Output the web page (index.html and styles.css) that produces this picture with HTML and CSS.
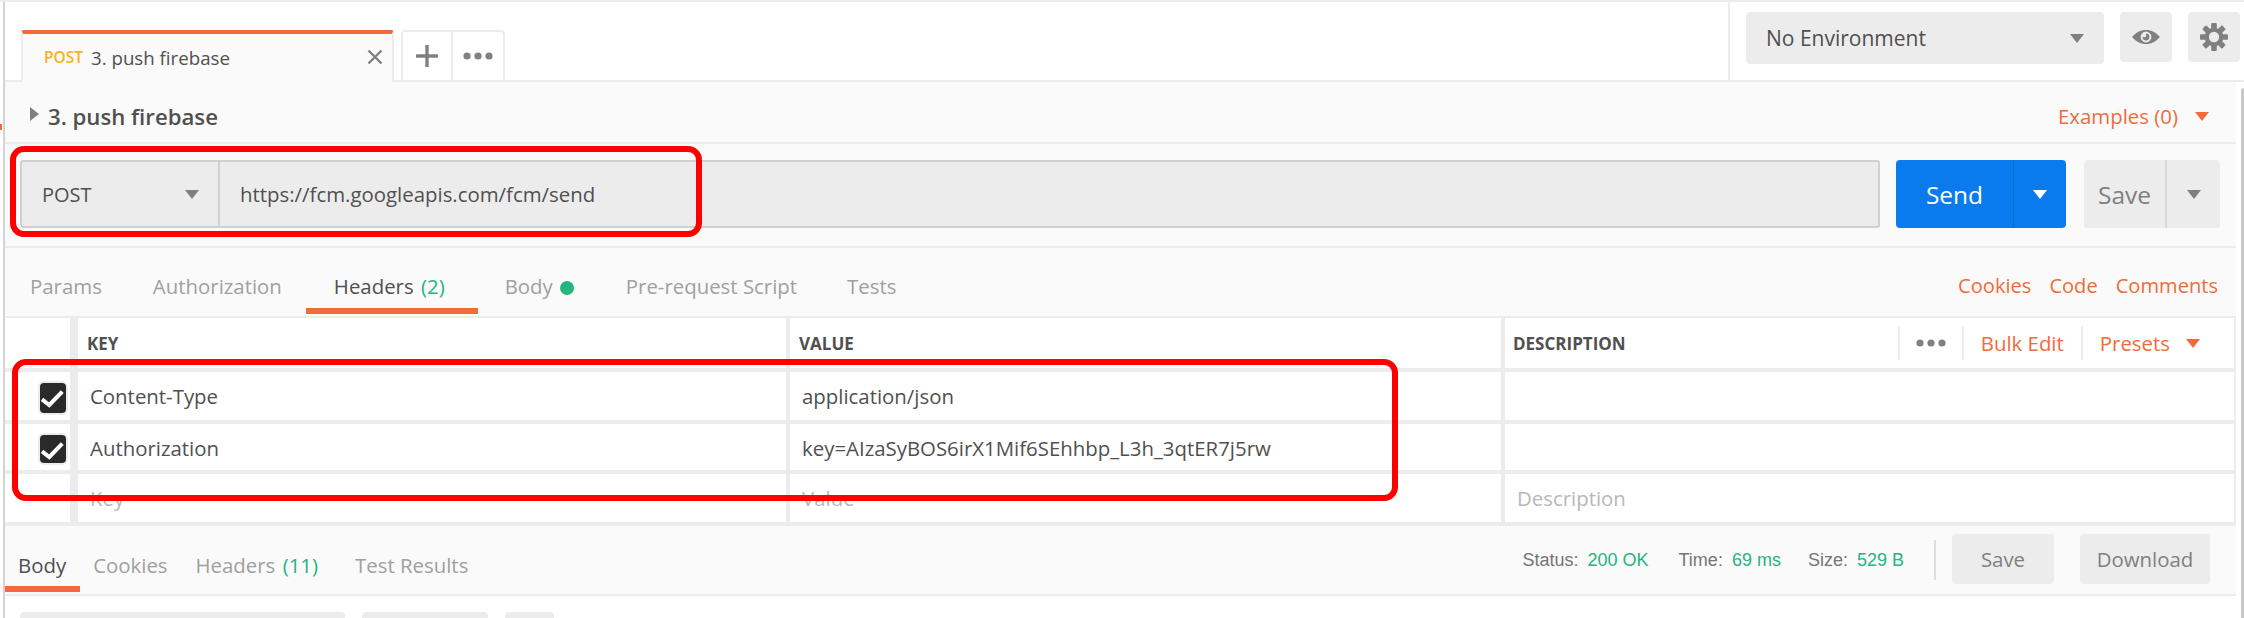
FILE: index.html
```html
<!DOCTYPE html>
<html lang="en">
<head>
<meta charset="utf-8">
<title>3. push firebase</title>
<link rel="stylesheet" href="styles.css">
</head>
<body>
<div class="app">
  <div class="edge-mark"></div>
  <header class="tabbar">
    <div class="tab">
      <span class="tab-method">POST</span>
      <span class="tab-name">3. push firebase</span>
      <svg class="tab-close" width="16" height="16" viewBox="0 0 16 16"><path d="M1.5 1.5l13 13M14.5 1.5l-13 13" stroke="#808080" stroke-width="2.4" fill="none"/></svg>
    </div>
    <div class="tab-actions">
      <div class="tab-action tab-action-plus">
        <svg width="22" height="22" viewBox="0 0 22 22"><path d="M11 1v20M1 11h20" stroke="#808080" stroke-width="3.4" stroke-linecap="round" fill="none"/></svg>
      </div>
      <div class="tab-action">
        <svg width="30" height="8" viewBox="0 0 30 8"><circle cx="4" cy="4" r="3.6" fill="#808080"/><circle cx="15" cy="4" r="3.6" fill="#808080"/><circle cx="26" cy="4" r="3.6" fill="#808080"/></svg>
      </div>
    </div>
    <div class="env">
      <div class="env-select">
        <span>No Environment</span>
        <i class="tri tri-grey"></i>
      </div>
      <div class="icon-btn">
        <svg width="28" height="14" viewBox="0 0 28 14"><path fill-rule="evenodd" fill="#808080" d="M0 7C4 2.500 8.500 0 14 0S24 2.500 28 7C24 11.500 19.500 14 14 14S4 11.500 0 7ZM14 1.600A5.400 5.400 0 1 0 14 12.400A5.400 5.400 0 1 0 14 1.600Z"/><path fill="#808080" d="M14 3.600A3.400 3.400 0 1 1 10.600 7L14 7Z"/></svg>
      </div>
      <div class="icon-btn">
        <svg width="28" height="28" viewBox="-15 -15 30 30"><g fill="#808080"><rect x="-3" y="-15" width="6" height="30" rx="1"/><rect x="-3" y="-15" width="6" height="30" rx="1" transform="rotate(45)"/><rect x="-3" y="-15" width="6" height="30" rx="1" transform="rotate(90)"/><rect x="-3" y="-15" width="6" height="30" rx="1" transform="rotate(135)"/></g><circle r="10" fill="#808080"/><circle r="5.500" fill="#ececec"/></svg>
      </div>
    </div>
  </header>

  <main class="builder">
    <div class="title-row">
      <i class="tri-right"></i>
      <h1 class="title">3. push firebase</h1>
      <div class="examples"><span>Examples (0)</span><i class="tri tri-orange"></i></div>
    </div>

    <div class="url-row">
      <div class="url-box">
        <div class="method"><span>POST</span><i class="tri tri-grey"></i></div>
        <div class="url">https://fcm.googleapis.com/fcm/send</div>
      </div>
      <div class="send-btn">
        <span class="send-label">Send</span>
        <span class="send-drop"><i class="tri tri-white"></i></span>
      </div>
      <div class="save-btn">
        <span class="save-label">Save</span>
        <span class="save-drop"><i class="tri tri-grey"></i></span>
      </div>
    </div>

    <nav class="req-tabs">
      <a class="req-tab req-params">Params</a>
      <a class="req-tab req-auth">Authorization</a>
      <a class="req-tab req-headers active">Headers <em class="count">(2)</em></a>
      <a class="req-tab req-body">Body<i class="dot"></i></a>
      <a class="req-tab req-pre">Pre-request Script</a>
      <a class="req-tab">Tests</a>
      <div class="req-links"><a>Cookies</a><a>Code</a><a>Comments</a></div>
    </nav>

    <div class="table">
      <div class="row row-head">
        <div class="cell cell-check"></div>
        <div class="cell cell-key">KEY</div>
        <div class="cell cell-value">VALUE</div>
        <div class="cell cell-desc">
          <span>DESCRIPTION</span>
          <div class="head-actions">
            <div class="head-more"><svg width="30" height="8" viewBox="0 0 30 8"><circle cx="4" cy="4" r="3.6" fill="#808080"/><circle cx="15" cy="4" r="3.6" fill="#808080"/><circle cx="26" cy="4" r="3.6" fill="#808080"/></svg></div>
            <a class="head-bulk">Bulk Edit</a>
            <a class="head-presets">Presets<i class="tri tri-orange"></i></a>
          </div>
        </div>
      </div>
      <div class="row row-one">
        <div class="cell cell-check"><span class="check"><svg width="26" height="30" viewBox="0 0 26 30"><path d="M2 16.300l7.300 5.700 13-13.300" stroke="#fff" stroke-width="4" fill="none"/></svg></span></div>
        <div class="cell cell-key">Content-Type</div>
        <div class="cell cell-value">application/json</div>
        <div class="cell cell-desc"></div>
      </div>
      <div class="row row-two">
        <div class="cell cell-check"><span class="check"><svg width="26" height="30" viewBox="0 0 26 30"><path d="M2 16.300l7.300 5.700 13-13.300" stroke="#fff" stroke-width="4" fill="none"/></svg></span></div>
        <div class="cell cell-key">Authorization</div>
        <div class="cell cell-value">key=AIzaSyBOS6irX1Mif6SEhhbp_L3h_3qtER7j5rw</div>
        <div class="cell cell-desc"></div>
      </div>
      <div class="row row-empty">
        <div class="cell cell-check"></div>
        <div class="cell cell-key">Key</div>
        <div class="cell cell-value">Value</div>
        <div class="cell cell-desc">Description</div>
      </div>
    </div>

    <div class="res-bar">
      <a class="res-tab active">Body</a>
      <a class="res-tab res-cookies">Cookies</a>
      <a class="res-tab res-headers">Headers <em class="count">(11)</em></a>
      <a class="res-tab">Test Results</a>
      <div class="res-meta">
        <span class="meta meta-status">Status: <b>200 OK</b></span>
        <span class="meta">Time: <b>69 ms</b></span>
        <span class="meta">Size: <b>529 B</b></span>
        <span class="meta-sep"></span>
        <span class="res-btn res-save">Save</span>
        <span class="res-btn res-download">Download</span>
      </div>
    </div>
  </main>

  <div class="res-tools">
    <span class="tool tool-a"></span>
    <span class="tool tool-b"></span>
    <span class="tool tool-c"></span>
  </div>

  <div class="scrollbar"></div>
  <div class="callout callout-url"></div>
  <div class="callout callout-rows"></div>
</div>
</body>
</html>
```

FILE: styles.css
```css
* { box-sizing: border-box; }
html, body { margin: 0; padding: 0; }
body { background: #fff; font-family: "Open Sans", "Liberation Sans", sans-serif; color: #505050; }
h1, a, em, b, i { font: inherit; font-style: normal; }

.app {
  position: relative;
  width: 2244px;
  height: 618px;
  overflow: hidden;
  padding: 0 0 0 4px;
  background: #fff;
  border-top: 2px solid #ececec;
}
.app::before {
  content: "";
  position: absolute;
  left: 3px; top: 0; bottom: 0;
  width: 2px;
  background: #d4d4d4;
}
.edge-mark {
  position: absolute;
  left: 0; top: 122px;
  width: 2px; height: 6px;
  background: #f26b3a;
}

/* top bar */
.tabbar {
  display: flex;
  align-items: flex-start;
  height: 80px;
  border-bottom: 2px solid #ececec;
  padding-left: 17px;
}
.tab {
  display: flex;
  align-items: center;
  width: 373px;
  height: 52px;
  margin-top: 28px;
  padding: 0 9px 2px 21px;
  background: #fafafa;
  border-top: 4px solid #f26b3a;
  border-left: 2px solid #ececec;
  border-right: 2px solid #ececec;
  border-radius: 3px 3px 0 0;
}
.tab-method { font-size: 15.5px; font-weight: 600; color: #fbb01e; margin-right: 8px; }
.tab-name { font-size: 18.7px; color: #505050; flex: 1; }
.tab-close { display: block; }
.tab-actions {
  display: flex;
  margin: 28px 0 0 7px;
  height: 50px;
  border: 2px solid #ececec;
  border-bottom: 0;
  border-radius: 4px 4px 0 0;
}
.tab-action { width: 50px; display: flex; align-items: center; justify-content: center; }
.tab-action-plus { border-right: 2px solid #ececec; }

.env {
  display: flex;
  align-items: flex-start;
  height: 78px;
  margin-left: auto;
  padding: 10px 4px 0 16px;
  border-left: 2px solid #ececec;
}
.env-select {
  display: flex;
  align-items: center;
  justify-content: space-between;
  width: 358px;
  height: 52px;
  padding: 0 20px;
  background: #ececec;
  border-radius: 4px;
  font-size: 21px;
  color: #505050;
}
.icon-btn {
  width: 52px; height: 50px;
  margin-left: 16px;
  background: #ececec;
  border-radius: 4px;
  display: flex; align-items: center; justify-content: center;
}

/* triangles */
.tri { display: block; width: 0; height: 0; border-left: 7px solid transparent; border-right: 7px solid transparent; border-top: 9px solid #808080; }
.tri-orange { border-top-color: #f26b3a; }
.tri-white { border-top-color: #fff; }
.tri-right { display: block; width: 0; height: 0; border-top: 7px solid transparent; border-bottom: 7px solid transparent; border-left: 9px solid #808080; margin: -4px 9px 0 0; }

/* builder */
.builder { width: 2232px; height: 514px; background: #fafafa; }
.title-row {
  display: flex;
  align-items: center;
  height: 62px;
  padding: 8px 27px 0 26px;
  border-bottom: 2px solid #ececec;
}
.title { font-size: 22.2px; font-weight: 600; margin: 0; color: #505050; }
.examples { display: flex; align-items: center; margin-left: auto; font-size: 20.4px; color: #f26b3a; }
.examples .tri { margin-left: 17px; }

.url-row {
  display: flex;
  height: 104px;
  padding: 16px 0 0 16px;
  border-bottom: 2px solid #ececec;
}
.url-box {
  display: flex;
  width: 1860px;
  height: 68px;
  background: #ececec;
  border: 2px solid #d0d0d0;
  border-radius: 3px;
}
.method {
  display: flex;
  align-items: center;
  justify-content: space-between;
  width: 198px;
  padding: 0 19px 0 20px;
  border-right: 2px solid #d0d0d0;
  font-size: 20px;
}
.url { display: flex; align-items: center; padding-left: 20px; font-size: 20.4px; }
.send-btn {
  display: flex;
  width: 170px;
  height: 68px;
  margin-left: 16px;
  color: #fff;
  background: #097bed;
  border-radius: 4px;
  font-size: 24.5px;
  font-weight: 500;
}
.send-label { width: 118px; display: flex; align-items: center; justify-content: center; border-right: 1px solid #0a6fd4; }
.send-drop { flex: 1; display: flex; align-items: center; justify-content: center; }
.save-btn {
  display: flex;
  width: 136px;
  height: 68px;
  margin-left: 18px;
  color: #808080;
  background: #ececec;
  border-radius: 4px;
  font-size: 24.5px;
  font-weight: 500;
}
.save-label { width: 83px; display: flex; align-items: center; justify-content: center; border-right: 2px solid #d8d8d8; }
.save-drop { flex: 1; display: flex; align-items: center; justify-content: center; }

.req-tabs {
  display: flex;
  align-items: flex-start;
  height: 68px;
  padding-left: 26px;
  font-size: 20.4px;
  color: #a0a0a0;
}
.req-tab { display: block; height: 66px; padding-top: 25px; line-height: 26px; }
.req-params { margin-right: 51px; }
.req-auth { margin-right: 24px; }
.req-headers { padding: 25px 33px 0 28px; margin-right: 27px; color: #505050; border-bottom: 6px solid #f26b3a; }
.count { color: #26b47f; margin-left: 2px; }
.req-body { display: flex; margin-right: 52px; }
.dot { display: block; width: 14px; height: 14px; margin: 8px 0 0 7px; border-radius: 50%; background: #26b47f; }
.req-pre { margin-right: 50px; }
.req-links { display: flex; gap: 18px; margin-left: auto; padding: 25px 18px 0 0; line-height: 26px; color: #f26b3a; font-size: 20.1px; }

/* table */
.table { background: #fff; border-top: 2px solid #ececec; border-right: 2px solid #ececec; }
.row {
  display: grid;
  grid-template-columns: 74px 712px 715px 1fr;
  border-bottom: 4px solid #ececec;
}
.row-head { height: 54px; }
.row-one { height: 52px; }
.row-two { height: 50px; }
.row-empty { height: 52px; }
.cell { display: flex; align-items: center; padding: 0 0 0 12px; font-size: 20.4px; color: #505050; border-right: 4px solid #ececec; }
.row-two .cell { padding-top: 2px; }
.cell-check { background: #fff; border-right-width: 8px; justify-content: flex-end; padding: 4px 4px 0 0; }
.row-two .cell-check { padding: 4px 4px 0 0; }
.cell-desc { border-right: 0; }
.row-head .cell { font-size: 17px; font-weight: 700; padding: 0 0 0 8px; }
.row-head .cell-check { padding: 0; }
.row-head .cell-key { padding-left: 9px; }
.row-head .cell-value { padding-left: 9px; }
.row-empty .cell { color: #b8b8b8; }
.check {
  display: block;
  width: 26px; height: 30px;
  background: #2a2a2a;
  border-radius: 4px;
  box-shadow: 0 0 0 2px #ececec;
}
.check svg { display: block; }
.row-two .check { height: 28px; overflow: hidden; }
.head-actions { display: flex; align-items: center; height: 100%; margin-left: auto; font-weight: 400; font-size: 20.4px; color: #f26b3a; }
.head-more { display: flex; align-items: center; justify-content: center; width: 66px; height: 34px; border-left: 2px solid #ececec; border-right: 2px solid #ececec; }
.head-bulk { padding: 0 17px; border-right: 2px solid #ececec; line-height: 34px; }
.head-presets { display: flex; align-items: center; padding: 0 34px 0 17px; line-height: 34px; }
.head-presets .tri { margin-left: 16px; }

/* response bar */
.res-bar {
  display: flex;
  align-items: flex-start;
  height: 70px;
  padding-left: 14px;
  border-bottom: 2px solid #ececec;
  font-size: 20.4px;
  color: #a0a0a0;
}
.res-tab { display: block; height: 66px; padding: 26px 0 0; line-height: 26px; margin-right: 37px; }
.res-tab.active { color: #505050; margin: 0 13px 0 -14px; padding: 26px 14px 0; border-bottom: 6px solid #f26b3a; }
.res-cookies { margin-right: 28px; }
.res-meta { display: flex; align-items: flex-start; margin-left: auto; padding-right: 26px; }
.meta { font-family: "Liberation Sans", sans-serif; font-size: 18px; line-height: 26px; padding-top: 21px; color: #757575; margin-right: 27px; }
.meta-status { margin-right: 30px; }
.meta b { color: #26b47f; margin-left: 4px; }
.meta-sep { width: 2px; height: 40px; margin: 14px 16px 0 3px; background: #ddd; }
.res-btn { display: flex; align-items: center; justify-content: center; height: 50px; margin-top: 8px; background: #ececec; border-radius: 4px; color: #808080; }
.res-save { width: 102px; margin-right: 26px; }
.res-download { width: 130px; }

.res-tools { display: flex; gap: 17px; padding: 16px 0 0 16px; }
.tool { display: block; height: 20px; background: #ececec; border-radius: 4px 4px 0 0; }
.tool-a { width: 325px; }
.tool-b { width: 126px; }
.tool-c { width: 49px; }

.scrollbar { position: absolute; right: 0; top: 86px; bottom: 0; width: 3px; background: #c8c8c8; border-radius: 3px 0 0 0; }

/* red annotation boxes laid over the app */
.callout { position: absolute; border: 6px solid #fe0000; border-radius: 14px; }
.callout-url { left: 10px; top: 144px; width: 692px; height: 91px; }
.callout-rows { left: 12px; top: 357px; width: 1386px; height: 142px; }
```
